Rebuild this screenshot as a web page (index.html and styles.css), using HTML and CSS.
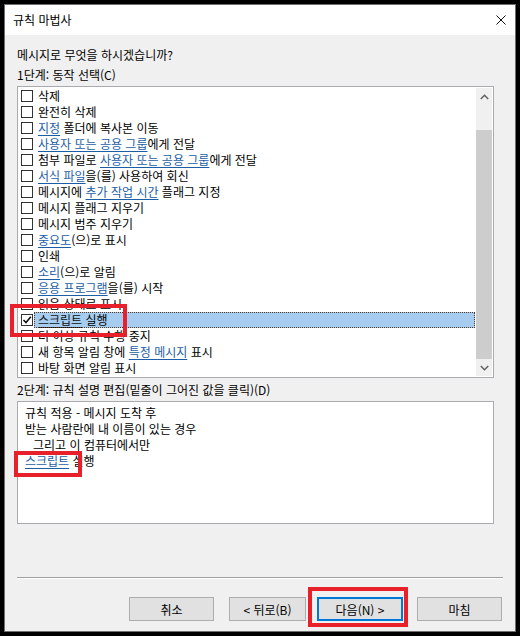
FILE: index.html
```html
<!DOCTYPE html>
<html lang="ko">
<head>
    <meta charset="UTF-8">
    <title>규칙 마법사</title>
    <link rel="stylesheet" href="styles.css">
</head>
<body>
    <div class="window">
        <div class="titlebar">
            <span class="title">규칙 마법사</span>
            <svg class="close" width="10" height="10" viewBox="0 0 10 10">
                <path d="M0.5 0.5 L9.5 9.5 M9.5 0.5 L0.5 9.5" stroke="#111" stroke-width="1" fill="none"/>
            </svg>
        </div>

        <div class="content">
            <div class="label first">메시지로 무엇을 하시겠습니까?</div>
            <div class="label">1단계: 동작 선택(C)</div>

            <div class="listbox">
                <div class="rows">
                    <div class="row"><span class="check"></span><span class="text">삭제</span></div>
                    <div class="row"><span class="check"></span><span class="text">완전히 삭제</span></div>
                    <div class="row"><span class="check"></span><span class="text"><a class="link">지정</a> 폴더에 복사본 이동</span></div>
                    <div class="row"><span class="check"></span><span class="text"><a class="link">사용자 또는 공용 그룹</a>에게 전달</span></div>
                    <div class="row"><span class="check"></span><span class="text">첨부 파일로 <a class="link">사용자 또는 공용 그룹</a>에게 전달</span></div>
                    <div class="row"><span class="check"></span><span class="text"><a class="link">서식 파일</a>을(를) 사용하여 회신</span></div>
                    <div class="row"><span class="check"></span><span class="text">메시지에 <a class="link">추가 작업 시간</a> 플래그 지정</span></div>
                    <div class="row"><span class="check"></span><span class="text">메시지 플래그 지우기</span></div>
                    <div class="row"><span class="check"></span><span class="text">메시지 범주 지우기</span></div>
                    <div class="row"><span class="check"></span><span class="text"><a class="link">중요도</a>(으)로 표시</span></div>
                    <div class="row"><span class="check"></span><span class="text">인쇄</span></div>
                    <div class="row"><span class="check"></span><span class="text"><a class="link">소리</a>(으)로 알림</span></div>
                    <div class="row"><span class="check"></span><span class="text"><a class="link">응용 프로그램</a>을(를) 시작</span></div>
                    <div class="row"><span class="check"></span><span class="text">읽음 상태로 표시</span></div>
                    <div class="row selected">
                        <span class="check checked">
                            <svg width="10" height="10" viewBox="0 0 10 10"><path d="M1.5 5 L4 7.5 L8.8 1.8" stroke="#111" stroke-width="1.6" fill="none"/></svg>
                        </span>
                        <span class="text"><a class="link">스크립트</a> 실행</span>
                    </div>
                    <div class="row"><span class="check"></span><span class="text">더 이상 규칙 수행 중지</span></div>
                    <div class="row"><span class="check"></span><span class="text">새 항목 알림 창에 <a class="link">특정 메시지</a> 표시</span></div>
                    <div class="row"><span class="check"></span><span class="text">바탕 화면 알림 표시</span></div>
                </div>
                <div class="scrollbar">
                    <div class="arrow">
                        <svg width="9" height="6" viewBox="0 0 9 6"><path d="M0.8 5 L4.5 1.3 L8.2 5" stroke="#606060" stroke-width="1.5" fill="none"/></svg>
                    </div>
                    <div class="track-top"></div>
                    <div class="thumb"></div>
                    <div class="arrow">
                        <svg width="9" height="6" viewBox="0 0 9 6"><path d="M0.8 1 L4.5 4.7 L8.2 1" stroke="#606060" stroke-width="1.5" fill="none"/></svg>
                    </div>
                </div>
            </div>

            <div class="label step2">2단계: 규칙 설명 편집(밑줄이 그어진 값을 클릭)(D)</div>
            <div class="desc">
                <div class="line">규칙 적용 - 메시지 도착 후</div>
                <div class="line">받는 사람란에 내 이름이 있는 경우</div>
                <div class="line indent">그리고 이 컴퓨터에서만</div>
                <div class="line"><a class="link">스크립트</a> 실행</div>
            </div>
        </div>

        <div class="separator"></div>

        <div class="buttons">
            <button class="btn cancel">취소</button>
            <button class="btn back">&lt; 뒤로(B)</button>
            <button class="btn next">다음(N) &gt;</button>
            <button class="btn finish">마침</button>
        </div>
    </div>

    <!-- 강조 표시 -->
    <div class="mark mark-row"></div>
    <div class="mark mark-link"></div>
    <div class="mark mark-next"></div>
</body>
</html>
```

FILE: styles.css
```css
* {
    margin: 0;
    padding: 0;
    box-sizing: border-box;
}
body {
    background-color: #000;
    font-family: "Noto Sans CJK KR", "Noto Sans", sans-serif;
    font-size: 12px;
    color: #000;
    width: 520px;
    height: 636px;
    overflow: hidden;
    position: relative;
}
.window {
    margin: 4px 0 0 4px;
    width: 512px;
    height: 628px;
    border: 1px solid #6f6f6f;
    background-color: #f0f0f0;
}
.titlebar {
    height: 30px;
    background-color: #fff;
    display: flex;
    align-items: center;
    justify-content: space-between;
    padding-left: 8px;
    padding-right: 9px;
}
.title {
    line-height: 16px;
}
.close {
    display: block;
}
.content {
    padding: 0 12px;
}
.label {
    line-height: 20px;
    height: 20px;
    white-space: nowrap;
}
.first {
    margin-top: 10px;
}
.step2 {
    margin-top: 2px;
}
.link {
    color: #1c5ea6;
    text-decoration: underline;
    text-underline-offset: 2px;
}

.listbox {
    margin-top: 1px;
    margin-right: 9px;
    height: 292px;
    border: 1px solid #a9abb1;
    background-color: #fff;
    padding: 1px;
    display: flex;
}
.rows {
    flex: 1;
}
.row {
    height: 16px;
    display: flex;
    align-items: center;
    padding-left: 2px;
    white-space: nowrap;
}
.check {
    width: 12px;
    height: 12px;
    border: 1px solid #333;
    background-color: #fff;
    display: flex;
    align-items: center;
    justify-content: center;
    flex-shrink: 0;
}
.text {
    flex: 1;
    height: 16px;
    line-height: 16px;
    margin-left: 1px;
    padding-left: 4px;
}
.selected .text {
    background-color: #a6cdf0;
    outline: 1px dotted #553a22;
    outline-offset: -1px;
    margin-right: 1px;
}
.selected .link {
    color: #111;
}
.scrollbar {
    width: 16px;
    background-color: #f0f0f0;
    display: flex;
    flex-direction: column;
}
.arrow {
    height: 17px;
    display: flex;
    align-items: center;
    justify-content: center;
}
.track-top {
    height: 25px;
}
.thumb {
    height: 229px;
    background-color: #cdcdcd;
}

.desc {
    margin-top: 1px;
    margin-right: 9px;
    height: 123px;
    border: 1px solid #a9abb1;
    background-color: #fff;
    padding: 3px 7px;
}
.line {
    line-height: 16px;
    height: 16px;
    white-space: nowrap;
}
.indent {
    padding-left: 8px;
}

.separator {
    margin: 53px 12px 0 12px;
    height: 2px;
    border-top: 1px solid #a0a0a0;
    border-bottom: 1px solid #fff;
}
.buttons {
    margin-top: 18px;
    display: flex;
    justify-content: flex-end;
    padding-right: 13px;
}
.btn {
    height: 24px;
    font-family: "Noto Sans CJK KR", "Noto Sans", sans-serif;
    font-size: 12px;
    color: #000;
    background-color: #e1e1e1;
    border: 1px solid #adadad;
}
.cancel {
    width: 85px;
}
.back {
    width: 77px;
    margin-left: 15px;
}
.next {
    width: 86px;
    margin-left: 11px;
    border: 2px solid #0078d7;
}
.finish {
    width: 85px;
    margin-left: 14px;
}

.mark {
    position: absolute;
    border: 4px solid #e8202a;
}
.mark-row {
    left: 10px;
    top: 304px;
    width: 117px;
    height: 33px;
}
.mark-link {
    left: 14px;
    top: 451px;
    width: 68px;
    height: 26px;
}
.mark-next {
    left: 308px;
    top: 587px;
    width: 100px;
    height: 40px;
}
```
